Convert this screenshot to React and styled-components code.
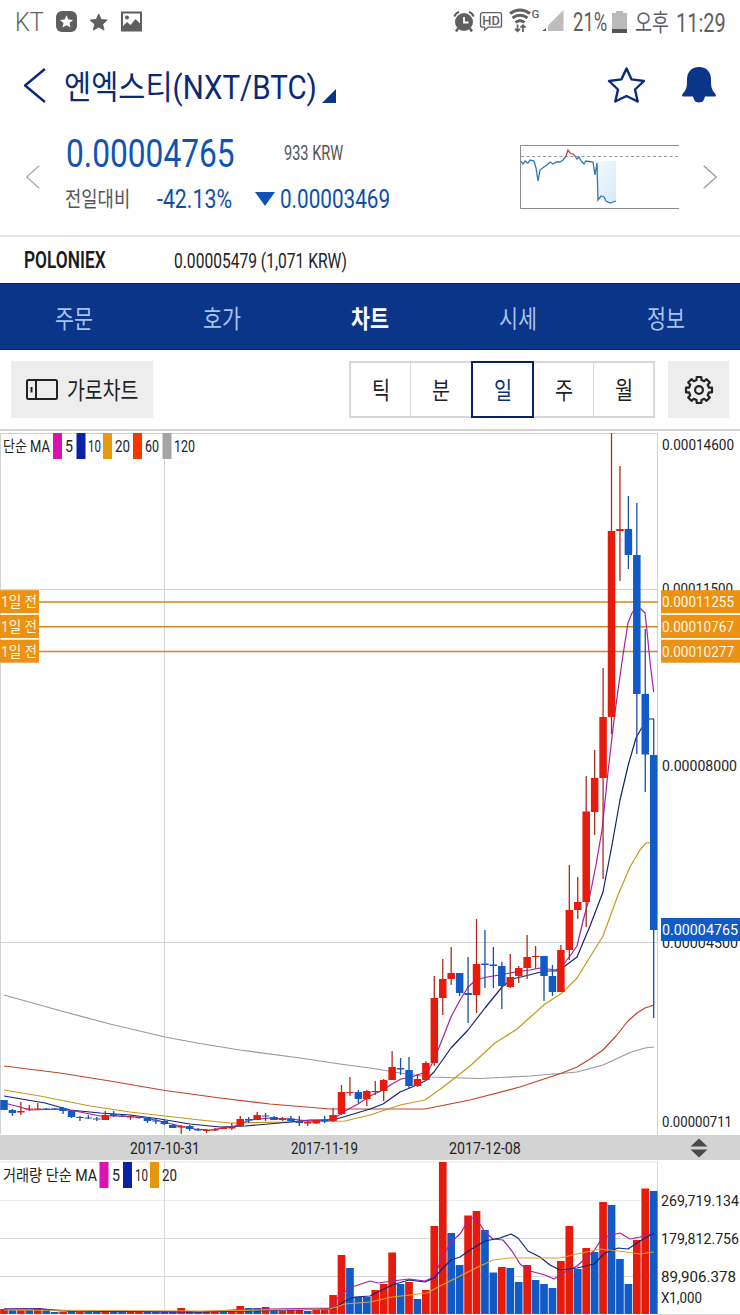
import React, { useLayoutEffect, useRef, useState } from "react";
import styled, { createGlobalStyle } from "styled-components";

const FONT = '"Roboto", "Noto Sans CJK KR", sans-serif';

const GlobalStyle = createGlobalStyle`
  * {
    box-sizing: border-box;
  }
  body {
    margin: 0;
    background: #fff;
    font-family: ${FONT};
  }
  svg {
    display: block;
    flex: none;
  }
`;

const Screen = styled.div`
  width: 740px;
  height: 1315px;
  overflow: hidden;
  display: flex;
  flex-direction: column;
  background: #fff;
`;

const FitBox = styled.span`
  display: block;
  flex: none;
  width: ${(p) => p.$width}px;
  height: ${(p) => p.$size * 1.2}px;
  margin-left: ${(p) => p.$left || 0}px;
  margin-top: ${(p) => p.$top || 0}px;
  font-size: ${(p) => p.$size}px;
  line-height: 1.2;
  font-weight: ${(p) => p.$weight || 400};
  color: ${(p) => p.$color || "#222"};
  white-space: nowrap;
`;

const FitInner = styled.span`
  display: inline-block;
  transform-origin: 0 50%;
`;

const Spacer = styled.span`
  flex: none;
  width: ${(p) => p.$width}px;
`;

// squeezes a label horizontally so that it fills the given width
const Fit = ({ width, size, left, top, weight, color, children }) => {
  const ref = useRef(null);
  const [scale, setScale] = useState(1);
  useLayoutEffect(() => {
    setScale(width / ref.current.offsetWidth);
  }, [width, size, children]);
  return (
    <FitBox
      $width={width}
      $size={size}
      $left={left}
      $top={top}
      $weight={weight}
      $color={color}
    >
      <FitInner ref={ref} style={{ transform: `scaleX(${scale})` }}>
        {children}
      </FitInner>
    </FitBox>
  );
};

const StatusBar = styled.div`
  height: 44px;
  display: flex;
  align-items: center;
  justify-content: space-between;
  padding: 0 14px 0 15px;
`;

const StatusGroup = styled.div`
  display: flex;
  align-items: center;
`;

const TitleBar = styled.header`
  height: 84px;
  display: flex;
  align-items: center;
  padding: 0 24px 2px 24px;
`;

const TitleActions = styled.div`
  margin-left: auto;
  display: flex;
  align-items: center;
  gap: 36px;
`;

const Corner = styled.span`
  width: 14px;
  height: 14px;
  margin: 22px 0 0 5px;
  background: #0a3588;
  clip-path: polygon(100% 0, 100% 100%, 0 100%);
`;

const QuotePanel = styled.section`
  height: 109px;
  display: flex;
  align-items: center;
  padding: 0 23px 10px 26px;
  border-bottom: 2px solid #e6e6e6;
`;

const QuoteText = styled.div`
  flex: none;
  width: 480px;
  height: 100%;
  padding-left: 26px;
  display: flex;
  flex-direction: column;
`;

const QuoteLine = styled.div`
  height: ${(p) => p.$height}px;
  display: flex;
  align-items: center;
`;

const Down = styled.span`
  width: 20px;
  height: 14px;
  margin-left: 23px;
  background: #0d54b4;
  clip-path: polygon(0 0, 100% 0, 50% 100%);
`;

const ExchangeRow = styled.div`
  height: 46px;
  display: flex;
  align-items: center;
  padding-left: 24px;
`;

const Nav = styled.nav`
  height: 67px;
  display: grid;
  grid-template-columns: repeat(5, 148px);
  background: #0a3588;
  border-top: 1px solid #04205f;
  border-bottom: 1px solid #04205f;
`;

const NavItem = styled.div`
  display: flex;
  align-items: center;
  justify-content: center;
  padding-top: 6px;
`;

const Toolbar = styled.div`
  height: 81px;
  display: flex;
  align-items: flex-start;
  padding: 11px 11px 0;
  border-bottom: 2px solid #d4d4d4;
`;

const GrayButton = styled.div`
  width: ${(p) => p.$width}px;
  height: 57px;
  display: flex;
  align-items: center;
  justify-content: center;
  background: #ededed;
`;

const Periods = styled.div`
  margin: 0 13px 0 auto;
  width: 306px;
  height: 57px;
  display: flex;
  border: 2px solid #d8d8d8;
`;

const Period = styled.div`
  flex: 1;
  margin: ${(p) => (p.$active ? "-2px 0 -2px 1px" : "0")};
  display: flex;
  align-items: center;
  justify-content: center;
  border: ${(p) => (p.$active ? "2px solid #0c2163" : "none")};
  border-left: ${(p) =>
    p.$active ? "2px solid #0c2163" : p.$line ? "1px solid #d8d8d8" : "none"};
`;

const ChartArea = styled.div`
  display: flex;
  height: 704px;
`;

const DateAxis = styled.div`
  height: 25px;
  display: flex;
  align-items: center;
  background: #d3d3d3;
`;

const GAP = 8.4377;
const centre = (i) => 4 + i * GAP;
const RED = "#e61b0c";
const BLUE = "#125ac6";

// colour, high, body top, body bottom, low
const CANDLES = [
  ["b", 1100, 1100, 1110, 1110], ["b", 1109, 1110, 1113, 1116],
  ["r", 1102, 1111, 1112.5, 1115], ["r", 1105, 1108.5, 1109.5, 1111],
  ["r", 1103, 1108.5, 1109.5, 1110], ["b", 1108, 1108.5, 1109.5, 1110],
  ["b", 1108, 1108.5, 1109.5, 1110], ["b", 1107, 1108, 1111, 1114],
  ["b", 1110, 1111, 1117, 1118], ["b", 1116, 1117, 1118, 1121],
  ["b", 1115, 1117.5, 1118.5, 1119], ["b", 1117, 1118.5, 1119.5, 1121],
  ["r", 1111, 1115, 1120, 1120], ["b", 1111, 1114, 1116, 1117],
  ["b", 1115, 1115.5, 1116.5, 1117], ["r", 1115, 1116.5, 1117.5, 1120],
  ["r", 1117, 1117, 1118, 1119], ["b", 1117, 1118, 1121, 1123],
  ["b", 1119, 1120.5, 1121.5, 1124], ["b", 1120, 1121, 1124, 1125],
  ["b", 1124, 1125, 1128, 1128], ["r", 1125, 1126, 1127.5, 1134],
  ["b", 1125, 1126, 1129, 1131], ["b", 1128, 1129, 1130.5, 1131],
  ["r", 1129, 1130, 1131, 1133], ["r", 1128, 1129, 1130.5, 1131],
  ["r", 1127, 1127.5, 1129, 1129], ["r", 1123, 1127, 1128.5, 1130],
  ["r", 1116, 1119, 1126, 1126], ["b", 1117, 1119, 1120.5, 1123],
  ["r", 1112, 1115, 1120, 1120], ["b", 1113, 1115.5, 1116.5, 1121],
  ["b", 1116, 1117, 1120, 1120], ["r", 1117, 1118.5, 1120, 1121],
  ["b", 1116, 1118.5, 1121, 1121], ["b", 1116, 1121, 1123, 1126],
  ["r", 1121, 1122, 1123.5, 1126], ["r", 1120, 1120, 1123.5, 1124],
  ["b", 1116, 1120, 1121.5, 1123], ["r", 1108, 1115, 1121, 1122],
  ["r", 1085, 1092, 1114, 1115], ["r", 1077, 1092, 1093, 1096],
  ["b", 1090, 1092, 1099, 1103], ["r", 1090, 1091, 1099, 1106],
  ["r", 1081, 1091, 1092, 1095], ["r", 1079, 1080, 1091, 1101],
  ["r", 1051, 1067, 1080, 1080], ["b", 1058, 1068, 1069.5, 1075],
  ["b", 1057, 1070, 1086, 1088], ["r", 1074, 1079, 1086, 1087],
  ["r", 1061, 1063, 1080, 1081], ["r", 976, 998, 1063, 1066],
  ["r", 959, 979, 998, 1015], ["r", 947, 973, 979, 985],
  ["b", 973, 973, 993, 996], ["b", 957, 993, 995, 1023],
  ["r", 919, 964, 995, 1013], ["b", 930, 963.5, 965, 988],
  ["b", 947, 964.5, 966, 988], ["b", 962, 966, 986, 1009],
  ["r", 954, 977, 987, 988], ["r", 966, 968, 976, 983],
  ["r", 935, 957, 968, 979], ["r", 946, 956, 957, 969],
  ["b", 956, 956, 976, 1001], ["b", 965, 976, 992, 996],
  ["r", 945, 950, 992, 992], ["r", 865, 910, 950, 960],
  ["r", 877, 902, 910, 919], ["r", 776, 811.5, 902, 927],
  ["r", 750, 778, 812, 835], ["r", 668, 717, 778, 879],
  ["r", 433, 531, 717, 734], ["r", 466, 529, 531, 581],
  ["b", 496, 529, 555, 569], ["b", 503, 555, 694, 754],
  ["b", 629, 694, 754.5, 792], ["b", 719, 755, 930, 1018],
];

const PRICE_MA = [
  {
    color: "#999",
    points:
      "4,995 65,1012 110,1024 165,1037 200,1043.5 240,1050 300,1058 340,1064 370,1068 400,1073 430,1077 480,1078.5 530,1076 577,1072 603,1065 615,1059.5 630,1052.5 645,1048 654,1047",
  },
  {
    color: "#bf4426",
    points:
      "4,1066 60,1073 110,1081 165,1090.5 220,1098 270,1104 330,1109 425,1109 445,1105 470,1100 520,1087 562,1073 577,1067 590,1059 603,1050 616,1036 628,1021 637,1013 645,1008 654,1005",
  },
  {
    color: "#c39a1c",
    points:
      "4,1090 40,1096 90,1106 130,1112 165,1116 200,1120 230,1123 290,1122 345,1121 370,1115 400,1105 425,1100 442,1088 470,1066 495,1043 517,1029 545,1004 562,993 577,978 590,957 603,936 618,895 630,867 640,850 646,843 654,842.5",
  },
  {
    color: "#10246f",
    points:
      "4,1096 45,1103 70,1110 100,1113 130,1115 160,1119 190,1124 220,1127 245,1126 280,1123 310,1120 333,1120 350,1115 370,1109 383,1104 400,1092 412,1087 425,1081 434,1072 451,1048 468,1030 485,1008 502,987 512,979 525,976 545,971 556,971 565,966 577,957 590,926 603,892 612,845 620,800 628,766 636,738 641,729 648,719 654,719",
  },
  {
    color: "#a81fa0",
    points:
      "4,1103 20,1107 30,1110 60,1109 75,1111 100,1116 115,1116 140,1117 160,1121 180,1126 195,1129 210,1130 235,1126 250,1120 270,1118 290,1119 310,1121 333,1119 345,1111 358,1104 370,1096 383,1090 392,1084 401,1079 412,1077 420,1074 428,1071 434,1060 442,1040 451,1017 460,1000 468,987 476,980 487,977 500,975 515,972 530,970 540,968 556,970 563,965 570,956 577,946 583,921 590,895 596,865 602,830 608,772 614,720 618,690 623,655 628,623 632,613 636,607.5 641,609 645,613 647,631 650,662 653.7,692",
  },
];

const VOLUMES = [
  ["r", 1309], ["b", 1310], ["r", 1310], ["b", 1310], ["r", 1309], ["b", 1310],
  ["b", 1312], ["r", 1312], ["b", 1311], ["r", 1312], ["b", 1312], ["b", 1312],
  ["r", 1311], ["b", 1311], ["b", 1312], ["r", 1312], ["r", 1312], ["b", 1311],
  ["b", 1312], ["b", 1311], ["b", 1311], ["r", 1308], ["b", 1311], ["b", 1312],
  ["r", 1312], ["r", 1312], ["b", 1311], ["r", 1310], ["r", 1306], ["b", 1308],
  ["b", 1308], ["r", 1307], ["b", 1310], ["r", 1311], ["r", 1310], ["r", 1310],
  ["b", 1311], ["r", 1309], ["r", 1308], ["r", 1295], ["r", 1255], ["b", 1268],
  ["b", 1297], ["b", 1297], ["r", 1290], ["r", 1284], ["r", 1252.5], ["b", 1284],
  ["r", 1282], ["b", 1299], ["r", 1290], ["r", 1226], ["r", 1162], ["b", 1233],
  ["b", 1265], ["r", 1215.5], ["r", 1211], ["b", 1230], ["b", 1272.5], ["r", 1267],
  ["b", 1268], ["b", 1282], ["r", 1265], ["b", 1280], ["b", 1284], ["b", 1288],
  ["r", 1261], ["r", 1226], ["b", 1269], ["r", 1248], ["b", 1252], ["r", 1202],
  ["b", 1205], ["b", 1259], ["b", 1284], ["r", 1240], ["r", 1188.5], ["b", 1191],
];

const VOLUME_MA = [
  {
    color: "#a81fa0",
    points:
      "4,1309 40,1308.5 60,1311 200,1312 240,1309.5 270,1309 330,1308 340,1295 352,1287 370,1281 378,1283 392,1281 409,1279 425,1281 434,1277 442,1258 451,1242 460,1234 470,1218 476,1218 485,1232 493,1239 503,1240 512,1251 520,1264 530,1271 545,1275 554,1279 565,1272 577,1266 586,1258 594,1251 602,1238 612,1235 620,1233 630,1239 640,1237 654,1233",
  },
  {
    color: "#10247f",
    points:
      "4,1309 40,1309 70,1311 200,1312 333,1309 345,1301 355,1297 370,1296 380,1291 392,1285 409,1280 425,1282 434,1278 442,1269 451,1260 460,1257 470,1250 485,1241 500,1238 511,1234 518,1238 528,1251 540,1257 550,1265 560,1270 577,1268 594,1264 605,1253 618,1248 628,1249 640,1241 654,1233",
  },
  {
    color: "#dda02a",
    points:
      "4,1310 200,1311 330,1309 345,1304 370,1302 392,1297 410,1295 427,1293 442,1285 460,1276 476,1268 493,1260 510,1258 528,1258 560,1258 577,1254 600,1249 618,1251 640,1254 654,1252",
  },
];

const ALERTS = [
  { y: 602, price: "0.00011255" },
  { y: 626.8, price: "0.00010767" },
  { y: 651.5, price: "0.00010277" },
];

const PRICE_LABELS = [
  { y: 445, text: "0.00014600", w: 72 },
  { y: 589, text: "0.00011500", w: 71 },
  { y: 766, text: "0.00008000", w: 75 },
  { y: 943, text: "0.00004500", w: 76 },
  { y: 1122, text: "0.00000711", w: 70 },
];

const VOLUME_LABELS = [
  { y: 1201, text: "269,719.134", w: 78 },
  { y: 1239, text: "179,812.756", w: 78 },
  { y: 1277, text: "89,906.378", w: 75 },
  { y: 1298, text: "X1,000", w: 41 },
];

const ChartText = ({ x, y, w, size = 15, color = "#222", children }) => (
  <text
    x={x}
    y={y + size * 0.36}
    fontSize={size}
    fill={color}
    textLength={w}
    lengthAdjust="spacingAndGlyphs"
    fontFamily={FONT}
  >
    {children}
  </text>
);

const Legend = ({ y, name, nameWidth, items }) => (
  <g>
    <ChartText x={3} y={y} w={nameWidth} size={16}>
      {name}
    </ChartText>
    {items.map((it) => (
      <g key={it.label}>
        <rect x={it.x} y={y - 13} width={9} height={26} fill={it.color} />
        <ChartText x={it.tx} y={y} w={it.w} size={16}>
          {it.label}
        </ChartText>
      </g>
    ))}
  </g>
);

const Lines = ({ lines }) =>
  lines.map((l) => (
    <polyline
      key={l.color}
      points={l.points}
      fill="none"
      stroke={l.color}
      strokeWidth="1.2"
      strokeLinejoin="round"
    />
  ));

const PriceChart = () => (
  <svg width="740" height="704" viewBox="0 431 740 704">
    <g stroke="#d2d2d2" strokeWidth="1">
      <path d="M0 433.5H658M0 589.5H658M0 942.5H658M164.5 433V1135M657.5 433V1135" />
      <path d="M.5 433V1134" />
    </g>
    {ALERTS.map((a) => (
      <path key={a.y} d={`M39 ${a.y}H658`} stroke="#cf8a20" strokeWidth="1.5" />
    ))}
    <Lines lines={PRICE_MA} />
    {CANDLES.map(([c, high, top, bottom, low], i) => (
      <g key={i}>
        <path
          d={`M${centre(i)} ${high}V${low}`}
          stroke={c === "r" ? "#ab2c22" : "#1c4f9c"}
          strokeWidth="1.3"
        />
        <rect
          x={centre(i) - 3.75}
          y={top}
          width="7.5"
          height={bottom - top}
          fill={c === "r" ? RED : BLUE}
        />
      </g>
    ))}
    <Legend
      y={446}
      name="단순 MA"
      nameWidth={47}
      items={[
        { label: "5", x: 53, tx: 65, w: 8, color: "#dc12b0" },
        { label: "10", x: 76.5, tx: 88, w: 13, color: "#0923a8" },
        { label: "20", x: 103, tx: 115, w: 15, color: "#e5980b" },
        { label: "60", x: 133, tx: 145, w: 14, color: "#ff3500" },
        { label: "120", x: 162.5, tx: 174, w: 21, color: "#a5a5a5" },
      ]}
    />
    {PRICE_LABELS.map((l) => (
      <ChartText key={l.y} x={662} y={l.y} w={l.w}>
        {l.text}
      </ChartText>
    ))}
    {ALERTS.map((a) => (
      <g key={a.y}>
        <rect x="0" y={a.y - 11.8} width="39" height="23" fill="#eb9113" />
        <ChartText x={1} y={a.y} w={36} color="#fff8e4">
          1일 전
        </ChartText>
        <rect x="661" y={a.y - 11.8} width="79" height="23" fill="#eb9113" />
        <ChartText x={662} y={a.y} w={72} color="#fff8e4">
          {a.price}
        </ChartText>
      </g>
    ))}
    <rect x="661" y="918" width="79" height="23" fill={BLUE} />
    <ChartText x={662} y={930} w={76} color="#fff">
      0.00004765
    </ChartText>
  </svg>
);

const VolumeChart = () => (
  <svg width="740" height="155" viewBox="0 1160 740 155">
    <g stroke="#d8d8d8" strokeWidth="1">
      <path d="M0 1162H658" stroke="#e4e4e4" />
      <path d="M0 1200.5H658" stroke="#eee" />
      <path d="M0 1238.5H658M0 1276.5H658M164.5 1162V1314M657.5 1162V1314M657 1314.5H740" />
    </g>
    {VOLUMES.map(([c, top], i) => (
      <rect
        key={i}
        x={centre(i) - 3.85}
        y={top}
        width="7.7"
        height={1314 - top}
        fill={c === "r" ? RED : BLUE}
      />
    ))}
    <Lines lines={VOLUME_MA} />
    <Legend
      y={1175}
      name="거래량 단순 MA"
      nameWidth={94}
      items={[
        { label: "5", x: 99.5, tx: 112, w: 8, color: "#dc12b0" },
        { label: "10", x: 123, tx: 135, w: 13, color: "#0923a8" },
        { label: "20", x: 150, tx: 162, w: 15, color: "#e5980b" },
      ]}
    />
    {VOLUME_LABELS.map((l) => (
      <ChartText key={l.y} x={661} y={l.y} w={l.w}>
        {l.text}
      </ChartText>
    ))}
  </svg>
);

const STAR = "M10 1 12.7 7.1 19.3 7.7 14.3 12.1 15.8 18.6 10 15.2 4.2 18.6 5.7 12.1 .7 7.7 7.3 7.1Z";

const LeftStatusIcons = () => (
  <svg width="88" height="24" viewBox="0 0 88 24">
    <rect x="1" y="1" width="21" height="21" rx="6" fill="#5f5f5f" />
    <path d={STAR} fill="#fff" transform="translate(4.5 4.5) scale(.7)" />
    <path
      d={STAR}
      fill="#5f5f5f"
      stroke="#5f5f5f"
      strokeLinejoin="round"
      transform="translate(34.5 3) scale(.92)"
    />
    <path
      d="M67 2.5h19v18H67z"
      fill="none"
      stroke="#5f5f5f"
      strokeWidth="2"
    />
    <circle cx="72" cy="7.5" r="2" fill="#5f5f5f" />
    <path d="M67 17 72 12l3.5 3 5-6 5 5v7H67z" fill="#5f5f5f" />
  </svg>
);

const RightStatusIcons = () => (
  <svg width="112" height="28" viewBox="453 8 112 28">
    <circle cx="464" cy="22" r="9" fill="#5f5f5f" />
    <path
      d="M458 28.5 456 31.5M470 28.5l2 3"
      stroke="#5f5f5f"
      strokeWidth="2.5"
    />
    <path
      d="M454.500 16.500q1-3.500 4.500-4.500M469 12q3.500 1 4.500 4.500"
      fill="none"
      stroke="#5f5f5f"
      strokeWidth="2.200"
    />
    <path d="M464 17v5.500h4.500" fill="none" stroke="#fff" strokeWidth="1.800" />
    <path
      d="M482.500 12.700h17a2 2 0 0 1 2 2v10.500a2 2 0 0 1-2 2h-11.500l-3.500 3v-3h-2a2 2 0 0 1-2-2v-10.500a2 2 0 0 1 2-2z"
      fill="none"
      stroke="#5f5f5f"
      strokeWidth="1.300"
    />
    <text x="482.300" y="25" fontSize="13.500" fill="#5f5f5f" fontWeight="500" textLength="17.500" lengthAdjust="spacingAndGlyphs">
      HD
    </text>
    <g fill="none" stroke="#5f5f5f" strokeWidth="2.900">
      <path d="M510 13.500q10-7 20 0M512.500 18q7.500-5.500 15 0M515.500 22.300q4.500-3.300 9 0" />
      <path
        d="M517.500 24.500v7M515 28.800l2.500 2.500 2.500-2.500M523 32v-7M520.500 27.700l2.500-2.500 2.500 2.500"
        strokeWidth="1.700"
      />
    </g>
    <text x="531.500" y="18" fontSize="11.500" fontWeight="500" fill="#5f5f5f">
      G
    </text>
    <path d="M563.500 10V31h-15.500V25.500z" fill="#bdbdbd" />
    <path d="M546 28v3h-4z" fill="#5f5f5f" />
  </svg>
);

const Battery = () => (
  <svg width="15" height="22" viewBox="0 0 15 22">
    <path d="M4 0h7v2h4v20H0V2h4z" fill="#bababa" />
    <path d="M0 18h15v4H0z" fill="#555" />
  </svg>
);

const Chevron = ({ width, height, color, stroke, right }) => (
  <svg width={width} height={height} viewBox="0 0 20 34" preserveAspectRatio="none">
    <path
      d={right ? "M1 1 19 17 1 33" : "M19 1 1 17 19 33"}
      fill="none"
      stroke={color}
      strokeWidth={stroke}
      vectorEffect="non-scaling-stroke"
    />
  </svg>
);

const StarIcon = () => (
  <svg width="39" height="38" viewBox="0 0 39 38">
    <path
      d="M19.500 2.500 24.600 13.400 37 15 28 23.500 30.700 35.500 19.500 30 8.300 35.500 11 23.500 2 15 14.400 13.400Z"
      fill="none"
      stroke="#0a2a78"
      strokeWidth="2.400"
      strokeLinejoin="round"
    />
  </svg>
);

const BellIcon = () => (
  <svg width="34" height="36" viewBox="0 0 34 36">
    <path
      d="M17 0c8 0 12 5.500 12 12.500 0 8 .5 10 4.500 14.500.8 1 .4 2.500-1 2.500H23c-1 3-1.500 6-6 6s-5-3-6-6H1.500C.1 29.500-.3 28 .5 27c4-4.500 4.500-6.500 4.500-14.500C5 5.500 9 0 17 0z"
      fill="#0a3588"
    />
  </svg>
);

const Sparkline = () => (
  <svg width="159" height="66" viewBox="0 0 159 66">
    <defs>
      <linearGradient id="drop" x1="0" y1="0" x2="1" y2="1">
        <stop offset="0" stopColor="#f4faff" />
        <stop offset="1" stopColor="#d6ebfa" />
      </linearGradient>
    </defs>
    <path d="M76 17H96V57L90 58 82 53 77 55z" fill="url(#drop)" />
    <path d="M159 1.500H.500V64.500H159" fill="none" stroke="#8c8c8c" />
    <path d="M1 12.500H159" stroke="#999" strokeDasharray="3 2.500" />
    <path
      d="M1 17 3 20 5 17 8 19 10 16 14 17 16 24 18 37 20 26 24 23 27 21 30 18 33 20 36 18 40 18 43 16 46 12"
      fill="none"
      stroke="#2f78b7"
      strokeWidth="1.300"
    />
    <path d="M46 12 48 6 50 9 53 10 55 12" fill="none" stroke="#b5473d" strokeWidth="1.300" />
    <path
      d="M55 12 57 15 59 13 62 18 64 20 66 17 73 18 75 31 77 19 78 56 81 52 84 53 86 57 90 59 96 57"
      fill="none"
      stroke="#2f78b7"
      strokeWidth="1.300"
    />
  </svg>
);

const PhoneIcon = () => (
  <svg width="32" height="21" viewBox="0 0 32 21">
    <rect x="1" y="1" width="30" height="19" rx="1.500" fill="none" stroke="#222" strokeWidth="2" />
    <path d="M10 1v19" stroke="#222" strokeWidth="2" />
    <path d="M5.500 8v5.500" stroke="#222" strokeWidth="2" />
  </svg>
);

// eight teeth, each one described by four polar points
const gearPoints = Array.from({ length: 8 }, (_, i) =>
  [
    [-14, 10.2],
    [-10, 13.2],
    [10, 13.2],
    [14, 10.2],
  ]
    .map(([offset, r]) => {
      const a = ((i * 45 + offset) * Math.PI) / 180;
      return `${(15 + r * Math.sin(a)).toFixed(2)},${(15 - r * Math.cos(a)).toFixed(2)}`;
    })
    .join(" ")
).join(" ");

const GearIcon = () => (
  <svg width="30" height="30" viewBox="0 0 30 30">
    <polygon
      points={gearPoints}
      fill="none"
      stroke="#222"
      strokeWidth="2.200"
      strokeLinejoin="round"
    />
    <circle cx="15" cy="15" r="3.900" fill="none" stroke="#222" strokeWidth="2.200" />
  </svg>
);

const SortIcon = () => (
  <svg width="18" height="20" viewBox="0 0 18 20">
    <path d="M9 .5 17.500 8.500H.5zM9 19.500 17.500 11.500H.5z" fill="#4a4a4a" />
  </svg>
);

const TABS = ["주문", "호가", "차트", "시세", "정보"];
const PERIODS = ["틱", "분", "일", "주", "월"];

const App = () => (
  <>
    <GlobalStyle />
    <Screen>
      <StatusBar>
        <StatusGroup>
          <Fit width={29} size={25} top={2} color="#5f5f5f" weight={300}>
            KT
          </Fit>
          <Spacer $width={11} />
          <LeftStatusIcons />
        </StatusGroup>
        <StatusGroup>
          <RightStatusIcons />
          <Fit width={34} size={25} left={8} top={2} color="#5f5f5f">
            21%
          </Fit>
          <Spacer $width={5} />
          <Battery />
          <Fit width={34} size={24} left={8} top={3} color="#5f5f5f">
            오후
          </Fit>
          <Fit width={50} size={26} left={7} top={3} color="#5f5f5f">
            11:29
          </Fit>
        </StatusGroup>
      </StatusBar>

      <TitleBar>
        <Chevron width={22} height={35} color="#0a2a78" stroke={2.4} />
        <Fit width={253} size={33} left={18} top={5} color="#0a2a78">
          엔엑스티(NXT/BTC)
        </Fit>
        <Corner />
        <TitleActions>
          <StarIcon />
          <BellIcon />
        </TitleActions>
      </TitleBar>

      <QuotePanel>
        <Chevron width={14} height={24} color="#aaa" stroke={1.3} />
        <QuoteText>
          <QuoteLine $height={50}>
            <Fit width={169} size={39} top={2} color="#0d54b4">
              0.00004765
            </Fit>
            <Fit width={59} size={20} left={49} color="#555">
              933 KRW
            </Fit>
          </QuoteLine>
          <QuoteLine $height={42}>
            <Fit width={65} size={21} left={-1} top={2} color="#555">
              전일대비
            </Fit>
            <Fit width={75} size={25} left={27} top={2} color="#0d4fa8">
              -42.13%
            </Fit>
            <Down />
            <Fit width={110} size={25} left={5} top={2} color="#0d4fa8">
              0.00003469
            </Fit>
          </QuoteLine>
        </QuoteText>
        <Sparkline />
        <Spacer $width={24} />
        <Chevron width={14} height={24} color="#999" stroke={1.3} right />
      </QuotePanel>

      <ExchangeRow>
        <Fit width={82} size={23} top={2} weight={600} color="#1c1c1c">
          POLONIEX
        </Fit>
        <Fit width={173} size={21} left={68} top={4}>
          0.00005479 (1,071 KRW)
        </Fit>
      </ExchangeRow>

      <Nav>
        {TABS.map((tab) => (
          <NavItem key={tab}>
            <Fit
              width={38}
              size={25}
              weight={tab === "차트" ? 700 : 400}
              color={tab === "차트" ? "#fff" : "#a9c3ee"}
            >
              {tab}
            </Fit>
          </NavItem>
        ))}
      </Nav>

      <Toolbar>
        <GrayButton $width={142}>
          <PhoneIcon />
          <Fit width={71} size={24} left={9} top={4}>
            가로차트
          </Fit>
        </GrayButton>
        <Periods>
          {PERIODS.map((p, i) => (
            <Period key={p} $active={p === "일"} $line={i > 0 && i !== 3}>
              <Fit
                width={18}
                size={24}
                top={4}
                color={p === "일" ? "#0d2f80" : "#222"}
              >
                {p}
              </Fit>
            </Period>
          ))}
        </Periods>
        <GrayButton $width={61}>
          <GearIcon />
        </GrayButton>
      </Toolbar>

      <ChartArea>
        <PriceChart />
      </ChartArea>
      <DateAxis>
        <Fit width={70} size={17} left={130} top={2}>
          2017-10-31
        </Fit>
        <Fit width={67} size={17} left={91} top={2}>
          2017-11-19
        </Fit>
        <Fit width={72} size={17} left={91} top={2}>
          2017-12-08
        </Fit>
        <Spacer $width={169} />
        <SortIcon />
      </DateAxis>
      <VolumeChart />
    </Screen>
  </>
);

export default App;
